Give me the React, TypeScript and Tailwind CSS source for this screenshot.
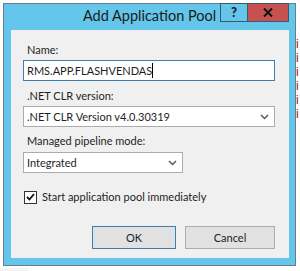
import React from "react";

const Chevron = () => (
  <svg width="9" height="6" viewBox="0 0 9 6" className="shrink-0">
    <polyline points="1,1 4.5,4.5 8,1" fill="none" stroke="#555" strokeWidth="1.5" />
  </svg>
);

const App = () => {
  return (
    <div className="w-[300px] h-[271px] bg-white overflow-hidden flex flex-col font-['Lato',sans-serif] text-[#1e1e1e]">
      {/* background fragments above the window */}
      <div className="h-[3px] shrink-0" />
      <div className="flex shrink-0">
        <div className="w-[3px] shrink-0" />

        {/* Window */}
        <div className="w-[293px] h-[263px] shrink-0 border border-[#6d7c86] bg-[#63c6ea] flex flex-col">
          {/* Title bar */}
          <div className="relative h-[26px] shrink-0 flex items-center justify-center">
            <span className="text-[14.5px] leading-none text-[#1b1b1b] -mt-[2px]">Add Application Pool</span>
            <div className="absolute top-[-1px] right-[6px] flex">
              <div className="w-[28px] h-[19px] border border-[#3b5968] bg-[#63c6ea] flex items-center justify-center text-[13px] font-black leading-none">
                ?
              </div>
              <div className="w-[41px] h-[19px] border border-l-0 border-[#3b5968] bg-[#c75050] flex items-center justify-center">
                <svg width="10" height="9" viewBox="0 0 10 9">
                  <path d="M1 0.5 L9 8.5 M9 0.5 L1 8.5" stroke="#111" strokeWidth="2" />
                </svg>
              </div>
            </div>
          </div>

          {/* Client area */}
          <div className="ml-[7px] w-[278px] h-[228px] bg-[#f0f0f0] flex flex-col pl-[12px] text-[11px] leading-[16px]">
            <div className="mt-[12px] pl-[4px]">Name:</div>
            <div className="mt-[2px] w-[252px] h-[21px] border border-[#3c7fb1] bg-white flex items-center pl-[3px]">
              <span>RMS.APP.FLASHVENDAS</span>
              <span className="w-px h-[15px] bg-black" />
            </div>

            <div className="mt-[7px] pl-[4px]">.NET CLR version:</div>
            <div className="mt-[2px] w-[252px] h-[21px] border border-[#acacac] bg-white flex items-center justify-between pl-[3px] pr-[5px]">
              <span>.NET CLR Version v4.0.30319</span>
              <Chevron />
            </div>

            <div className="mt-[6px] pl-[4px]">Managed pipeline mode:</div>
            <div className="mt-[3px] w-[160px] h-[21px] border border-[#acacac] bg-white flex items-center justify-between pl-[3px] pr-[5px]">
              <span>Integrated</span>
              <Chevron />
            </div>

            <div className="mt-[16px] flex items-center pl-[1px]">
              <div className="w-[13px] h-[13px] border border-[#333] bg-white flex items-center justify-center">
                <svg width="9" height="8" viewBox="0 0 9 8">
                  <polyline points="1,4 3.5,6.5 8,1" fill="none" stroke="#111" strokeWidth="1.8" />
                </svg>
              </div>
              <span className="ml-[5px]">Start application pool immediately</span>
            </div>

            <div className="mt-[21px] flex pl-[69px] gap-[9px]">
              <div className="w-[84px] h-[23px] border border-[#3c7fb1] bg-[#e1e1e1] flex items-center justify-center">
                OK
              </div>
              <div className="w-[90px] h-[23px] border border-[#adadad] bg-[#e1e1e1] flex items-center justify-center">
                Cancel
              </div>
            </div>
          </div>
        </div>

        {/* background fragments right of the window */}
        <div className="w-[4px] shrink-0 overflow-hidden pt-[34px] text-[12px] leading-[14px] text-[#a0152a] font-['Liberation_Sans',sans-serif]">
          <div>i</div>
          <div>i</div>
          <div>i</div>
          <div>i</div>
          <div>i</div>
          <div>i</div>
        </div>
      </div>
      <div className="flex-1 flex">
        <div className="w-[28px] mt-[2px] bg-[#f4f4f4]" />
      </div>
    </div>
  );
};

export default App;
